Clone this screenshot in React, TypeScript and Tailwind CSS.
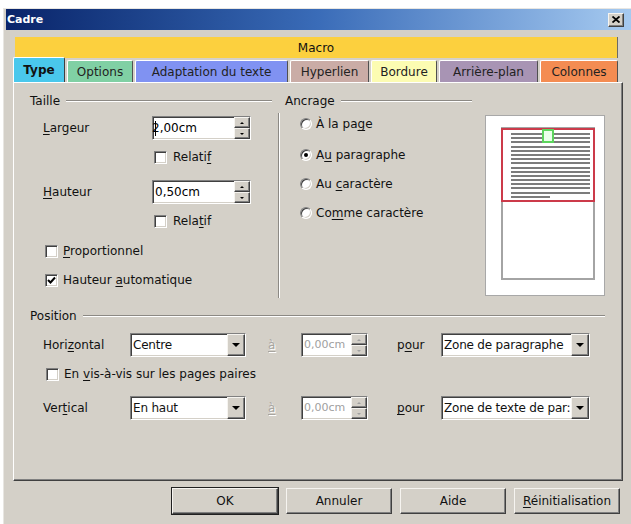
import type { ReactNode } from 'react'

const sunken =
  'border border-t-[#808080] border-l-[#808080] border-b-white border-r-white shadow-[inset_1px_1px_0_#404040,inset_-1px_-1px_0_#d4d0c8]'
const raised =
  'border border-t-[#f6f4f0] border-l-[#f6f4f0] border-b-[#404040] border-r-[#404040] shadow-[inset_-1px_-1px_0_#808080]'
const etched = 'h-0 border-t border-b border-t-[#8c8984] border-b-white'

function U({ children }: { children: ReactNode }) {
  return <span className="underline underline-offset-[2px]">{children}</span>
}

function Check({ checked }: { checked?: boolean }) {
  return (
    <span className={`flex h-[13px] w-[13px] shrink-0 items-center justify-center bg-white ${sunken}`}>
      {checked && (
        <svg width="9" height="9" viewBox="0 0 9 9">
          <path d="M1 4 L3.5 6.5 L8 1.5" fill="none" stroke="#000" strokeWidth="2" />
        </svg>
      )}
    </span>
  )
}

function Radio({ checked }: { checked?: boolean }) {
  return (
    <span className="flex h-[12px] w-[12px] shrink-0 items-center justify-center rounded-full border border-t-[#808080] border-l-[#808080] border-b-white border-r-white bg-white shadow-[inset_1px_1px_0_#404040,inset_-1px_-1px_0_#d4d0c8]">
      {checked && <span className="h-[4px] w-[4px] rounded-full bg-black" />}
    </span>
  )
}

function SpinBtn({ up, disabled }: { up?: boolean; disabled?: boolean }) {
  const c = disabled ? 'border-b-[#a0a0a0]' : 'border-b-black'
  const d = disabled ? 'border-t-[#a0a0a0]' : 'border-t-black'
  return (
    <div className={`flex h-[11px] items-center justify-center bg-[#d4d0c8] ${raised}`}>
      {up ? (
        <span className={`h-0 w-0 border-x-[2px] border-x-transparent border-b-[2px] ${c}`} />
      ) : (
        <span className={`h-0 w-0 border-x-[2px] border-x-transparent border-t-[2px] ${d}`} />
      )}
    </div>
  )
}

function Spin({ value, className, disabled, caret }: { value: string; className: string; disabled?: boolean; caret?: boolean }) {
  return (
    <div className={`flex h-[24px] shrink-0 bg-white ${sunken} ${className}`}>
      <div
        className={`flex flex-1 items-center whitespace-nowrap pl-[2px] ${
          disabled ? 'text-[11px] text-[#a0a0a0]' : 'text-black'
        }`}
      >
        {caret && <span className="mr-[-4px] h-[15px] w-[1px] bg-black" />}
        {value}
      </div>
      <div className="flex w-[16px] shrink-0 flex-col">
        <SpinBtn up disabled={disabled} />
        <SpinBtn disabled={disabled} />
      </div>
    </div>
  )
}

function Select({ value, className }: { value: string; className: string }) {
  return (
    <div className={`flex h-[24px] shrink-0 bg-white ${sunken} ${className}`}>
      <div className="flex flex-1 items-center overflow-hidden whitespace-nowrap pl-[2px] tracking-[-0.2px]">{value}</div>
      <div className={`flex w-[18px] shrink-0 items-center justify-center bg-[#d4d0c8] ${raised}`}>
        <span className="h-0 w-0 border-x-[4px] border-x-transparent border-t-[4px] border-t-black" />
      </div>
    </div>
  )
}

const tabs = [
  { label: 'Options', cls: 'w-[66px] bg-[#80d0a4]' },
  { label: 'Adaptation du texte', cls: 'w-[153px] bg-[#8092f2]' },
  { label: 'Hyperlien', cls: 'w-[79px] bg-[#caaca6]' },
  { label: 'Bordure', cls: 'w-[66px] bg-[#fcfcb2]' },
  { label: 'Arrière-plan', cls: 'w-[99px] bg-[#a894b4]' },
  { label: 'Colonnes', cls: 'w-[78px] bg-[#f48c52]' },
]

function PosRow({ label, sel, pour, target }: { label: ReactNode; sel: string; pour: ReactNode; target: string }) {
  return (
    <div className="flex h-[24px] items-center">
      <div className="w-[100px] pl-[13px]">{label}</div>
      <Select value={sel} className="w-[116px]" />
      <div className="w-[55px] pl-[22px] text-[#a8a5a0] [text-shadow:1px_1px_0_#fff]">
        <U>à</U>
      </div>
      <Spin value="0,00cm" className="w-[67px]" disabled />
      <div className="w-[73px] pl-[29px]">{pour}</div>
      <Select value={target} className="w-[149px]" />
    </div>
  )
}

export default function App() {
  return (
    <div className="h-[524px] w-[631px] bg-white pl-[3px] pt-[8px] font-['DejaVu_Sans',sans-serif] text-[12px] leading-[14px] text-[#111]">
      <div className="h-[516px] w-[628px] border-l border-t border-l-[#e8e6e2] border-t-[#e8e6e2] bg-[#d4d0c8] pl-[2px]">
        {/* Title bar */}
        <div className="flex h-[21px] items-center justify-between bg-linear-to-r from-[#0a246a] via-[#3a6cb8] to-[#a6caf0] pl-[1px] pr-[7px]">
          <span className="text-[11px] font-bold text-white">Cadre</span>
          <div className={`flex h-[14px] w-[16px] items-center justify-center bg-[#d4d0c8] ${raised}`}>
            <svg width="8" height="7" viewBox="0 0 8 7">
              <path d="M0.5 0.5 L7.5 6.5 M7.5 0.5 L0.5 6.5" stroke="#000" strokeWidth="1.8" />
            </svg>
          </div>
        </div>

        <div className="pl-[7px] pt-[7px]">
          {/* Macro bar */}
          <div className="ml-[2px] flex h-[21px] w-[603px] items-center justify-center border-r border-r-[#6c6a66] bg-[#fcd03e]">
            Macro
          </div>

          {/* Tabs */}
          <div className="flex h-[24px] items-end gap-[2px]">
            <div className="flex h-[25px] w-[52px] items-center justify-center rounded-t-[2px] border-l border-t border-r border-l-white border-t-white border-r-[#404040] bg-[#4ac8ec] font-bold">
              Type
            </div>
            {tabs.map((t) => (
              <div
                key={t.label}
                className={`flex h-[22px] items-center justify-center rounded-t-[2px] border-l border-t border-r border-l-white border-t-white border-r-[#505050] text-[#222] ${t.cls}`}
              >
                {t.label}
              </div>
            ))}
          </div>

          {/* Panel */}
          <div className="h-[399px] w-[610px] border border-l-white border-t-white border-b-[#404040] border-r-[#404040] pl-[16px] pt-[11px] shadow-[inset_-1px_-1px_0_#808080]">
            <div className="flex">
              {/* Taille */}
              <div className="w-[242px]">
                <div className="flex h-[14px] items-center gap-[6px]">
                  <span>Taille</span>
                  <div className={`flex-1 ${etched}`} />
                </div>
                <div className="mt-[8px] flex h-[24px] items-center">
                  <div className="w-[122px] pl-[13px]">
                    <U>L</U>argeur
                  </div>
                  <Spin value="2,00cm" className="w-[99px]" caret />
                </div>
                <div className="mt-[10px] flex h-[14px] items-center gap-[6px] pl-[124px]">
                  <Check />
                  <span>
                    Relati<U>f</U>
                  </span>
                </div>
                <div className="mt-[16px] flex h-[24px] items-center">
                  <div className="w-[122px] pl-[13px]">
                    <U>H</U>auteur
                  </div>
                  <Spin value="0,50cm" className="w-[99px]" />
                </div>
                <div className="mt-[10px] flex h-[14px] items-center gap-[6px] pl-[124px]">
                  <Check />
                  <span>
                    Rela<U>t</U>if
                  </span>
                </div>
                <div className="mt-[16px] flex h-[14px] items-center gap-[5px] pl-[15px]">
                  <Check />
                  <span>
                    <U>P</U>roportionnel
                  </span>
                </div>
                <div className="mt-[15px] flex h-[14px] items-center gap-[5px] pl-[15px]">
                  <Check checked />
                  <span>
                    Hauteur <U>a</U>utomatique
                  </span>
                </div>
              </div>

              {/* Separator */}
              <div className="ml-[6px] mt-[19px] h-[185px] w-0 border-l border-r border-l-[#8c8984] border-r-white" />

              {/* Ancrage */}
              <div className="ml-[5px] w-[187px]">
                <div className="flex h-[14px] items-center gap-[6px]">
                  <span>Ancrage</span>
                  <div className={`flex-1 ${etched}`} />
                </div>
                <div className="mt-[9px] flex h-[14px] items-center gap-[4px] pl-[15px]">
                  <Radio />
                  <span>
                    À la pa<U>g</U>e
                  </span>
                </div>
                <div className="mt-[17px] flex h-[14px] items-center gap-[4px] pl-[15px]">
                  <Radio checked />
                  <span>
                    A<U>u</U> paragraphe
                  </span>
                </div>
                <div className="mt-[15px] flex h-[14px] items-center gap-[4px] pl-[15px]">
                  <Radio />
                  <span>
                    Au <U>c</U>aractère
                  </span>
                </div>
                <div className="mt-[15px] flex h-[14px] items-center gap-[4px] pl-[15px]">
                  <Radio />
                  <span>
                    Co<U>m</U>me caractère
                  </span>
                </div>
              </div>

              {/* Preview */}
              <div className="ml-[13px] mt-[21px] h-[181px] w-[120px] border border-[#a8a8a8] bg-white pl-[15px] pt-[11px]">
                <div className="h-[153px] w-[94px] border-2 border-[#a4a4a4] bg-white">
                  <div className="relative -mx-[2px] -mt-[1px] h-[74px] border-2 border-[#cc3a4a] pl-[8px] pr-[3px] pt-[3px]">
                    <div className="flex flex-col gap-[2.2px]">
                      {Array.from({ length: 15 }).map((_, i) => (
                        <div key={i} className="h-[2px] bg-[#7c7c7c]" />
                      ))}
                      <div className="h-[2px] w-[39px] bg-[#7c7c7c]" />
                    </div>
                    <div className="absolute left-[39px] top-[-1px] h-[14px] w-[12px] border-2 border-[#5cd45c] bg-[#eaffea]" />
                  </div>
                </div>
              </div>
            </div>

            {/* Position */}
            <div className="mt-[11px] w-[575px]">
              <div className="flex h-[14px] items-center gap-[6px]">
                <span>Position</span>
                <div className={`flex-1 ${etched}`} />
              </div>
              <div className="mt-[10px]">
                <PosRow
                  label={
                    <>
                      Hori<U>z</U>ontal
                    </>
                  }
                  sel="Centre"
                  pour={
                    <>
                      p<U>o</U>ur
                    </>
                  }
                  target="Zone de paragraphe"
                />
              </div>
              <div className="mt-[10px] flex h-[14px] items-center gap-[5px] pl-[16px]">
                <Check />
                <span>
                  En <U>v</U>is-à-vis sur les pages paires
                </span>
              </div>
              <div className="mt-[15px]">
                <PosRow
                  label={
                    <>
                      Ver<U>t</U>ical
                    </>
                  }
                  sel="En haut"
                  pour={
                    <>
                      <U>p</U>our
                    </>
                  }
                  target="Zone de texte de par:"
                />
              </div>
            </div>
          </div>

          {/* Buttons */}
          <div className="ml-[159px] mt-[7px] flex gap-[8px]">
            <div className={`flex h-[26px] w-[106px] items-center justify-center bg-[#d4d0c8] outline outline-1 outline-[#202020] ${raised}`}>
              OK
            </div>
            <div className={`flex h-[26px] w-[106px] items-center justify-center bg-[#d4d0c8] ${raised}`}>Annuler</div>
            <div className={`flex h-[26px] w-[106px] items-center justify-center bg-[#d4d0c8] ${raised}`}>Aide</div>
            <div className={`flex h-[26px] w-[106px] items-center justify-center bg-[#d4d0c8] ${raised}`}>
              <span>
                <U>R</U>éinitialisation
              </span>
            </div>
          </div>
        </div>
      </div>
    </div>
  )
}
